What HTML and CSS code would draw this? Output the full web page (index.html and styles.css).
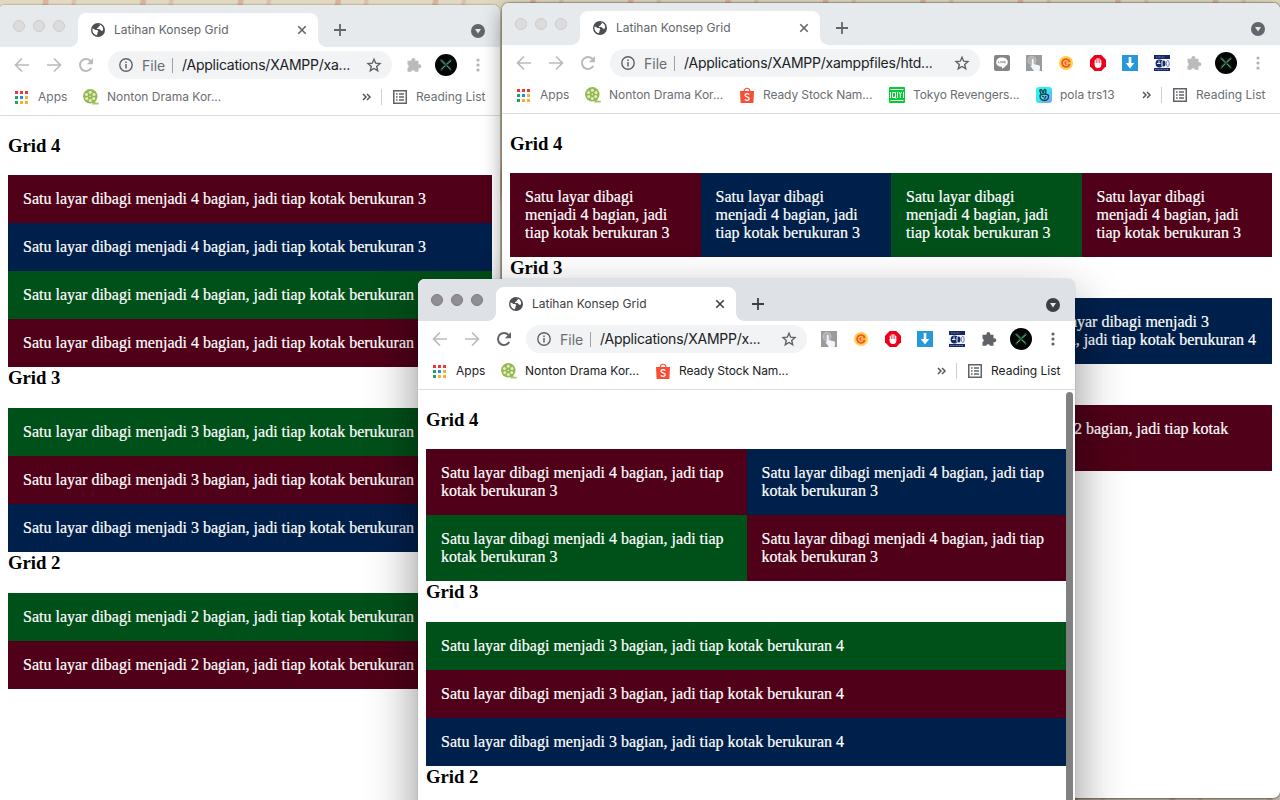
FILE: index.html
```html
<!DOCTYPE html>
<html lang="id">
<head>
<meta charset="utf-8">
<title>Latihan Konsep Grid</title>
<link rel="stylesheet" href="styles.css">
</head>
<body>
<svg class="defs" width="0" height="0" aria-hidden="true">
  <symbol id="globe" viewBox="0 0 14 14"><circle cx="7" cy="7" r="7" fill="#4b4f54"/><path d="M1.6 5.6C3.8 6.4 4 7.1 5.5 7.1S7.8 8.300 6.900 9 7.100 10.700 5.600 12.300C2.500 11.500.900 8.600 1.600 5.600ZM6.200 1.700h3.100C9.200 3 7.600 2.900 7.700 3.900S5.800 4.300 5.900 5.400 7.500 5.500 8.600 6.200s1.400 1.900 3.100 1.500c1.100-1.500.300-4.200-1.900-5.600Z" fill="#fff"/></symbol>
  <symbol id="close" viewBox="0 0 10 10"><path d="M1.300 1.300l7.400 7.400M8.700 1.300L1.300 8.700" stroke="currentColor" stroke-width="1.600"/></symbol>
  <symbol id="plus" viewBox="0 0 12 12"><path d="M6 0v12M0 6h12" stroke="currentColor" stroke-width="1.800"/></symbol>
  <symbol id="down" viewBox="0 0 14 14"><circle cx="7" cy="7" r="7" fill="currentColor"/><path d="M4 5h6L7 9.500Z" fill="#e6eaed"/></symbol>
  <symbol id="back" viewBox="0 0 16 16"><path d="M15 8H2M8 1.500L1.500 8 8 14.500" fill="none" stroke="currentColor" stroke-width="1.700"/></symbol>
  <symbol id="fwd" viewBox="0 0 16 16"><path d="M1 8h13M8 1.500L14.500 8 8 14.500" fill="none" stroke="currentColor" stroke-width="1.700"/></symbol>
  <symbol id="reload" viewBox="0 0 16 16"><path d="M13.200 11A6 6 0 1 1 12.500 4" fill="none" stroke="currentColor" stroke-width="2"/><path d="M15 1v6.200H8.800Z" fill="currentColor"/></symbol>
  <symbol id="info" viewBox="0 0 14 14"><circle cx="7" cy="7" r="6.200" fill="none" stroke="#5f6368" stroke-width="1.400"/><path d="M7 6v4.500M7 3.400v1.600" stroke="#5f6368" stroke-width="1.500"/></symbol>
  <symbol id="star" viewBox="0 0 16 16"><path d="M8 2.200l1.700 4 4.300.400-3.300 2.900 1 4.200L8 11.500l-3.700 2.200 1-4.200L2 6.600l4.300-.400Z" fill="none" stroke="#5f6368" stroke-width="1.400"/></symbol>
  <symbol id="puzzle" viewBox="0 0 16 16"><path d="M1.500 3.700h4a2 2 0 1 1 3.800 0h3.200v3.700a2 2 0 1 1 0 3.700v3.600H9a2 2 0 0 0-3.800 0H1.500v-3.600a2 2 0 0 0 0-3.700Z" fill="currentColor"/></symbol>
  <symbol id="avatar" viewBox="0 0 22 22"><circle cx="11" cy="11" r="11" fill="#030505"/><path d="M5.500 6c2.500.5 3.500 3 5.500 5M16.500 6c-2 .5-3.500 3-5.500 5M6 16.500c1-3 3-3.500 5-5.500M16 16.500c-1-3-3-3.500-5-5.500" fill="none" stroke="#27543c" stroke-width="1.900"/><path d="M6 6.500l4 4M16 7l-4 3M7 15l3-3M15 15l-3-3" stroke="#4aa66f" stroke-width="1"/></symbol>
  <symbol id="dots" viewBox="0 0 4 14"><g fill="currentColor"><circle cx="2" cy="2" r="1.600"/><circle cx="2" cy="7" r="1.600"/><circle cx="2" cy="12" r="1.600"/></g></symbol>
  <symbol id="apps" viewBox="0 0 13 13"><path d="M0 0h3v3H0zM5 0h3v3H5zM10 0h3v3h-3z" fill="#f53535"/><path d="M0 5h3v3H0zM0 10h3v3H0z" fill="#1fa463"/><path d="M5 5h3v3H5z" fill="#1a8cf0"/><path d="M10 5h3v3h-3zM5 10h3v3H5zM10 10h3v3h-3z" fill="#fbae35"/></symbol>
  <symbol id="film" viewBox="0 0 16 16"><path d="M11 11.500c.5 2 2 2.500 4.800 2.300v1.700H9Z" fill="#a9c765"/><circle cx="7.300" cy="7.300" r="7.200" fill="#94b94d"/><g fill="#e2edcb"><circle cx="7.300" cy="3.200" r="1.500"/><circle cx="11" cy="5.600" r="1.500"/><circle cx="10.700" cy="9.600" r="1.500"/><circle cx="7.300" cy="11.600" r="1.500"/><circle cx="3.800" cy="9.600" r="1.500"/><circle cx="3.500" cy="5.600" r="1.500"/><circle cx="7.300" cy="7.400" r=".8"/></g></symbol>
  <symbol id="shop" viewBox="0 0 16 16"><path d="M5 5c0-5 6-5 6 0" fill="none" stroke="#f4503a" stroke-width="1.200"/><path d="M1 4h14l-.6 12H1.600Z" fill="#f94e36"/><path d="M10.300 7.600C8.700 6.200 6 6.500 6 8.200c0 2.100 4.200 1.400 4.200 3.600 0 1.900-2.800 2-4.500.700" fill="none" stroke="#fff" stroke-width="1.300"/></symbol>
  <symbol id="qiyi" viewBox="0 0 16 16"><rect width="16" height="16" rx="1" fill="#00cc36"/><path d="M1.500 2.500h13M1.500 13.500h13" stroke="#fff" stroke-width="1"/><path d="M1.500 5v6M3.500 5.500h3v5h-3zM5.500 9.500l1.500 2M8.500 5v6M10 5l1.300 2.500L12.600 5M11.300 7.500V11M14.500 5v6" stroke="#fff" fill="none"/></symbol>
  <symbol id="hand" viewBox="0 0 16 16"><defs><linearGradient id="cy" x2="1" y2="1"><stop offset=".4" stop-color="#31eff0"/><stop offset="1" stop-color="#8796ff"/></linearGradient></defs><rect width="16" height="16" rx="3" fill="url(#cy)"/><path d="M5 7L3.800 3.500C4.500 2 5.800 2.500 6.200 4l.8 2M7.500 6l.5-3c1-1 2-.3 2 1l-.500 3M4 8.500c2-2 7-2 8.500 0 .3 3-1.200 5-4 5S4 12 4 8.500ZM6 9l2 1M10 9l-1.500 3" fill="none" stroke="#163d43" stroke-width="1.300"/></symbol>
  <symbol id="list" viewBox="0 0 14 14"><rect x=".75" y=".75" width="12.500" height="12.500" fill="none" stroke="#5f6368" stroke-width="1.500"/><path d="M3 4h1.600M3 7h1.600M3 10h1.600M6 4h5M6 7h5M6 10h5" stroke="#5f6368" stroke-width="1.400"/></symbol>
  <symbol id="more" viewBox="0 0 10 8"><path d="M1 1l3 3-3 3M5 1l3 3-3 3" fill="none" stroke="#55595e" stroke-width="1.500"/></symbol>
  <symbol id="chat" viewBox="0 0 16 16"><rect width="16" height="16" rx="2" fill="#858585"/><path d="M8 2.500c3.500 0 5.800 2 5.800 4.700 0 2.900-3.200 5-5.800 6.600v-2C4.500 11.700 2.200 10 2.200 7.200 2.200 4.500 4.500 2.500 8 2.500Z" fill="#fff"/><path d="M4.500 6v2h1.200M6.700 6v2.200M7.800 8.200V6l1.500 2V6M11.800 6h-1.300v2h1.300M10.500 7h1" fill="none" stroke="#858585" stroke-width=".6"/></symbol>
  <symbol id="touch" viewBox="0 0 16 16"><rect width="16" height="16" fill="#9b9b9b"/><circle cx="6" cy="5.500" r="4" fill="#aeaeae" stroke="#c2c2c2"/><path d="M5.800 4.500c0-1 1.900-1 1.900 0V9l5.200 1.200c1.500.4 1.300 2 .700 5.800H8L4.500 11.300c0-1 .8-1 1.300-.200Z" fill="#f1f6fa"/></symbol>
  <symbol id="ring" viewBox="0 0 14 14"><circle cx="7" cy="7" r="7" fill="#ffcf45"/><circle cx="7" cy="7" r="4.800" fill="#f4533b"/><path d="M9 5.600a2.400 2.400 0 1 0 0 2.800M7 7h5" fill="none" stroke="#ffcf45" stroke-width="1.300"/></symbol>
  <symbol id="stop" viewBox="0 0 16 16"><path d="M4.700 0h6.600L16 4.700v6.600L11.300 16H4.700L0 11.300V4.700Z" fill="#ee0018"/><path d="M5.300 5v4M7.100 3.700v5M8.900 3.700v5M10.700 5v4" stroke="#fff" stroke-width="1.200" stroke-linecap="round"/><path d="M4.700 8h6.600v2c0 2-1 3-3.300 3s-3.300-1-3.300-3Z" fill="#fff"/></symbol>
  <symbol id="dl" viewBox="0 0 16 16"><rect width="16" height="16" fill="#2799db"/><path d="M6.700 2h2.600v6h2.900L8 13.500 3.800 8h2.900Z" fill="#fff"/></symbol>
  <symbol id="fb" viewBox="0 0 16 16"><rect width="16" height="16" fill="#f5f7fb"/><path d="M0 0h16v4H0zM0 13h16v3H0z" fill="#152766"/><path d="M2 2h9M1 14.500h13" stroke="#9aa8cf" stroke-width=".700" stroke-dasharray="1 .5"/><circle cx="5.500" cy="8.500" r="3.900" fill="#142a69"/><path d="M5 5.500v3.500M3 8.500h3.500" stroke="#fff" stroke-width=".9"/><ellipse cx="9.800" cy="8.500" rx="1.700" ry="3" fill="#142a69"/><path d="M8 6v5.500" stroke="#fff"/><ellipse cx="13.800" cy="8.500" rx="1.400" ry="3.200" fill="none" stroke="#7281ad"/></symbol>
</svg>

<main class="desktop">
  <section class="window window-left inactive">
    <header>
      <div class="tabs"><div class="lights"><i></i><i></i><i></i></div><div class="tab"><svg class="s14"><use href="#globe"/></svg><span class="tab-title">Latihan Konsep Grid</span><svg class="s10"><use href="#close"/></svg></div><svg class="s12 new"><use href="#plus"/></svg><svg class="s14 search"><use href="#down"/></svg></div>
      <div class="toolbar"><div class="nav"><svg class="s16"><use href="#back"/></svg><svg class="s16"><use href="#fwd"/></svg><svg class="s16"><use href="#reload"/></svg></div><div class="omnibox"><svg class="s14"><use href="#info"/></svg><span class="scheme">File</span><span class="url">/Applications/XAMPP/xa...</span><svg class="s16"><use href="#star"/></svg></div><div class="ext"><svg class="s16"><use href="#puzzle"/></svg></div><svg class="s22"><use href="#avatar"/></svg><svg class="menu"><use href="#dots"/></svg></div>
      <div class="bookmarks"><svg class="s13"><use href="#apps"/></svg><span class="apps">Apps</span><div class="mark"><svg class="s16"><use href="#film"/></svg><span class="w114">Nonton Drama Kor...</span></div><svg class="more"><use href="#more"/></svg><div class="reading"><svg class="s14"><use href="#list"/></svg><span>Reading List</span></div></div>
    </header>
    <article class="page">
      <h3>Grid 4</h3>
      <div class="row one">
        <p class="red">Satu layar dibagi menjadi 4 bagian, jadi tiap kotak berukuran 3</p><p class="blue">Satu layar dibagi menjadi 4 bagian, jadi tiap kotak berukuran 3</p><p class="green">Satu layar dibagi menjadi 4 bagian, jadi tiap kotak berukuran 3</p><p class="red">Satu layar dibagi menjadi 4 bagian, jadi tiap kotak berukuran 3</p>
      </div>
      <h3>Grid 3</h3>
      <div class="row one">
        <p class="green">Satu layar dibagi menjadi 3 bagian, jadi tiap kotak berukuran 4</p><p class="red">Satu layar dibagi menjadi 3 bagian, jadi tiap kotak berukuran 4</p><p class="blue">Satu layar dibagi menjadi 3 bagian, jadi tiap kotak berukuran 4</p>
      </div>
      <h3>Grid 2</h3>
      <div class="row one">
        <p class="green">Satu layar dibagi menjadi 2 bagian, jadi tiap kotak berukuran 6</p><p class="red">Satu layar dibagi menjadi 2 bagian, jadi tiap kotak berukuran 6</p>
      </div>
    </article>
  </section>

  <section class="window window-right inactive">
    <header>
      <div class="tabs"><div class="lights"><i></i><i></i><i></i></div><div class="tab"><svg class="s14"><use href="#globe"/></svg><span class="tab-title">Latihan Konsep Grid</span><svg class="s10"><use href="#close"/></svg></div><svg class="s12 new"><use href="#plus"/></svg><svg class="s14 search"><use href="#down"/></svg></div>
      <div class="toolbar"><div class="nav"><svg class="s16"><use href="#back"/></svg><svg class="s16"><use href="#fwd"/></svg><svg class="s16"><use href="#reload"/></svg></div><div class="omnibox"><svg class="s14"><use href="#info"/></svg><span class="scheme">File</span><span class="url">/Applications/XAMPP/xamppfiles/htd...</span><svg class="s16"><use href="#star"/></svg></div><div class="ext"><svg class="s16"><use href="#chat"/></svg><svg class="s16"><use href="#touch"/></svg><svg class="s14 pad"><use href="#ring"/></svg><svg class="s16"><use href="#stop"/></svg><svg class="s16"><use href="#dl"/></svg><svg class="s16"><use href="#fb"/></svg><svg class="s16"><use href="#puzzle"/></svg></div><svg class="s22"><use href="#avatar"/></svg><svg class="menu"><use href="#dots"/></svg></div>
      <div class="bookmarks"><svg class="s13"><use href="#apps"/></svg><span class="apps">Apps</span><div class="mark"><svg class="s16"><use href="#film"/></svg><span class="w114">Nonton Drama Kor...</span></div><div class="mark"><svg class="s16"><use href="#shop"/></svg><span class="w110">Ready Stock Nam...</span></div><div class="mark"><svg class="s16"><use href="#qiyi"/></svg><span class="w107">Tokyo Revengers...</span></div><div class="mark"><svg class="s16"><use href="#hand"/></svg><span>pola trs13</span></div><svg class="more"><use href="#more"/></svg><div class="reading"><svg class="s14"><use href="#list"/></svg><span>Reading List</span></div></div>
    </header>
    <article class="page">
      <h3>Grid 4</h3>
      <div class="row four">
        <p class="red">Satu layar dibagi menjadi 4 bagian, jadi tiap kotak berukuran 3</p><p class="blue">Satu layar dibagi menjadi 4 bagian, jadi tiap kotak berukuran 3</p><p class="green">Satu layar dibagi menjadi 4 bagian, jadi tiap kotak berukuran 3</p><p class="red">Satu layar dibagi menjadi 4 bagian, jadi tiap kotak berukuran 3</p>
      </div>
      <h3>Grid 3</h3>
      <div class="row three">
        <p class="green">Satu layar dibagi menjadi 3 bagian, jadi tiap kotak berukuran 4</p><p class="red">Satu layar dibagi menjadi 3 bagian, jadi tiap kotak berukuran 4</p><p class="blue">Satu layar dibagi menjadi 3 bagian, jadi tiap kotak berukuran 4</p>
      </div>
      <h3>Grid 2</h3>
      <div class="row two">
        <p class="green">Satu layar dibagi menjadi 2 bagian, jadi tiap kotak berukuran 6</p><p class="red">Satu layar dibagi menjadi 2 bagian, jadi tiap kotak berukuran 6</p>
      </div>
    </article>
  </section>

  <section class="window window-front">
    <header>
      <div class="tabs"><div class="lights"><i></i><i></i><i></i></div><div class="tab"><svg class="s14"><use href="#globe"/></svg><span class="tab-title">Latihan Konsep Grid</span><svg class="s10"><use href="#close"/></svg></div><svg class="s12 new"><use href="#plus"/></svg><svg class="s14 search"><use href="#down"/></svg></div>
      <div class="toolbar"><div class="nav"><svg class="s16"><use href="#back"/></svg><svg class="s16"><use href="#fwd"/></svg><svg class="s16 live"><use href="#reload"/></svg></div><div class="omnibox"><svg class="s14"><use href="#info"/></svg><span class="scheme">File</span><span class="url">/Applications/XAMPP/x...</span><svg class="s16"><use href="#star"/></svg></div><div class="ext"><svg class="s16"><use href="#touch"/></svg><svg class="s14 pad"><use href="#ring"/></svg><svg class="s16"><use href="#stop"/></svg><svg class="s16"><use href="#dl"/></svg><svg class="s16"><use href="#fb"/></svg><svg class="s16"><use href="#puzzle"/></svg></div><svg class="s22"><use href="#avatar"/></svg><svg class="menu"><use href="#dots"/></svg></div>
      <div class="bookmarks"><svg class="s13"><use href="#apps"/></svg><span class="apps">Apps</span><div class="mark"><svg class="s16"><use href="#film"/></svg><span class="w114">Nonton Drama Kor...</span></div><div class="mark"><svg class="s16"><use href="#shop"/></svg><span class="w110">Ready Stock Nam...</span></div><svg class="more"><use href="#more"/></svg><div class="reading"><svg class="s14"><use href="#list"/></svg><span>Reading List</span></div></div>
    </header>
    <article class="page">
      <h3>Grid 4</h3>
      <div class="row two">
        <p class="red">Satu layar dibagi menjadi 4 bagian, jadi tiap kotak berukuran 3</p><p class="blue">Satu layar dibagi menjadi 4 bagian, jadi tiap kotak berukuran 3</p><p class="green">Satu layar dibagi menjadi 4 bagian, jadi tiap kotak berukuran 3</p><p class="red">Satu layar dibagi menjadi 4 bagian, jadi tiap kotak berukuran 3</p>
      </div>
      <h3>Grid 3</h3>
      <div class="row one">
        <p class="green">Satu layar dibagi menjadi 3 bagian, jadi tiap kotak berukuran 4</p><p class="red">Satu layar dibagi menjadi 3 bagian, jadi tiap kotak berukuran 4</p><p class="blue">Satu layar dibagi menjadi 3 bagian, jadi tiap kotak berukuran 4</p>
      </div>
      <h3>Grid 2</h3>
      <div class="scrollbar"></div>
    </article>
  </section>
</main>
</body>
</html>
```
FILE: styles.css
```css
* { box-sizing: border-box; }
html, body { margin: 0; overflow: hidden; }
.defs { position: absolute; }
.desktop {
  position: relative;
  width: 1280px;
  height: 800px;
  overflow: hidden;
  background: repeating-linear-gradient(100deg, #e0d8bf 0 42px, #d8b49b 43px 47px, #e2d8c4 49px 70px, #dbbfa8 72px 74px, #e0d8bf 76px 96px);
}

/* Windows */
.window {
  position: absolute;
  background: #fff;
  border-radius: 7px;
  color: #202124;
  --bar: #dee1e6;
  --strong: #3c4043;
}
.window > header { border-radius: 7px 7px 0 0; overflow: hidden; }
.window-left { left: -2px; padding-left: 2px; top: 5px; width: 502px; height: 805px; box-shadow: 0 0 2px rgba(0,0,0,.5); }
.window-right { left: 502px; top: 3px; width: 778px; height: 795px; box-shadow: 0 0 1px 1px rgba(70,65,50,.4), 0 7px 20px rgba(0,0,0,.4); }
.window-front { left: 418px; top: 279px; width: 657px; height: 600px; box-shadow: 0 0 1px rgba(0,0,0,.5), 0 22px 50px rgba(0,0,0,.45); }
.inactive { --bar: #e6eaed; --strong: #626569; color: #6b6e72; }
.window-left > header { margin-left: -2px; padding-left: 2px; background: linear-gradient(var(--bar) 42px, #fff 42px); }

svg { display: block; flex: none; }
.s10 { width: 10px; height: 10px; }
.s12 { width: 12px; height: 12px; }
.s13 { width: 13px; height: 13px; }
.s14 { width: 14px; height: 14px; }
.s16 { width: 16px; height: 16px; }
.s22 { width: 22px; height: 22px; }

/* Browser chrome */
header { height: 111px; border-bottom: 1px solid #d9dbdd; background: #fff; font: 12px/16px Inter, "Liberation Sans", sans-serif; white-space: nowrap; }
.tabs { height: 42px; background: var(--bar); display: flex; align-items: center; padding: 2px 15px 0 13px; color: var(--strong); }
.lights { display: flex; gap: 8px; width: 65px; margin-top: -2px; }
.lights i { width: 12px; height: 12px; border-radius: 50%; background: #8f8e93; border: 1px solid #7b7a7f; }
.inactive .lights i { background: #dcdcdc; border-color: #cbcbcc; }
.tab { position: relative; width: 240px; height: 34px; align-self: flex-end; background: #fff; border-radius: 8px 8px 0 0; display: flex; align-items: center; padding: 0 11px 0 13px; gap: 9px; }
.tab::before, .tab::after { content: ""; position: absolute; bottom: 0; width: 8px; height: 8px; }
.tab::before { left: -8px; background: radial-gradient(circle at 0 0, var(--bar) 7.5px, #fff 8px); }
.tab::after { right: -8px; background: radial-gradient(circle at 100% 0, var(--bar) 7.5px, #fff 8px); }
.tab-title { flex: 1; }
.new { margin: 17px 0 0 16px; align-self: flex-start; }
.search { margin-left: auto; margin-top: 8px; }
.toolbar { height: 36px; display: flex; align-items: center; padding-right: 20px; color: var(--strong); }
.nav { width: 108px; display: flex; gap: 16px; padding-left: 14px; color: #b9bbbd; }
.live { color: #5f6368; }
.omnibox { flex: 1; min-width: 0; height: 28px; border-radius: 14px; background: #f1f3f4; display: flex; align-items: center; padding: 0 10px 0 11px; font-size: 14px; letter-spacing: -.23px; color: #202124; }
.scheme { color: #6a6d71; width: 31px; margin: 0 9px; border-right: 1px solid #9fa2a5; line-height: 15px; letter-spacing: 0; }
.url { flex: 1; }
.ext { display: flex; gap: 16px; align-items: center; margin: 0 13px 0 14px; }
.pad { margin: 0 1px; }
.ext svg:last-child { color: #5f6368; }
.inactive .ext svg:last-child { color: #b9bbbd; }
.menu { width: 4px; height: 14px; margin-left: 19px; color: #5f6368; }
.inactive .menu { color: #b0b2b4; }
.bookmarks { height: 28px; display: flex; align-items: center; padding: 0 15px; }
.apps { margin-left: 10px; width: 45px; flex: none; }
.mark { display: flex; flex: none; gap: 8px; margin-right: 16px; align-items: center; }
.mark .w114 { width: 114px; }
.mark .w110 { width: 110px; letter-spacing: -.1px; }
.mark .w107 { width: 107px; letter-spacing: -.1px; }
.more { width: 10px; height: 8px; margin-left: auto; margin-right: 9px; }
.reading { display: flex; align-items: center; gap: 9px; height: 16px; width: 104px; padding-left: 11px; border-left: 1px solid #cdcfd1; flex: none; }

/* Page content */
.page { padding: 19px 8px 0; font: 16px/18px "Liberation Serif", serif; color: #000; }
.page h3 { margin: 0 0 19px; font-size: 18.720px; line-height: 22px; }
.page h3:first-child { margin-bottom: 18px; }
.row { display: grid; }
.two { grid-template-columns: repeat(2, 1fr); }
.three { grid-template-columns: repeat(3, 1fr); }
.four { grid-template-columns: repeat(4, 1fr); }
.row p { margin: 0; padding: 15px; color: #fff; -webkit-text-stroke: .2px #fff; }
.red { background: #500018; }
.blue { background: #00204c; }
.green { background: #005019; }
.scrollbar { position: absolute; right: 2px; top: 113px; width: 7px; height: 480px; background: #808080; border-radius: 4px; }
```
